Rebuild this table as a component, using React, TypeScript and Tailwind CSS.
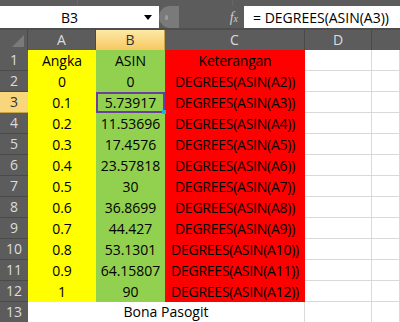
import React from "react";

const rows: { n: number; a: string; b: string }[] = [
  { n: 2, a: "0", b: "0" },
  { n: 3, a: "0.1", b: "5.73917" },
  { n: 4, a: "0.2", b: "11.53696" },
  { n: 5, a: "0.3", b: "17.4576" },
  { n: 6, a: "0.4", b: "23.57818" },
  { n: 7, a: "0.5", b: "30" },
  { n: 8, a: "0.6", b: "36.8699" },
  { n: 9, a: "0.7", b: "44.427" },
  { n: 10, a: "0.8", b: "53.1301" },
  { n: 11, a: "0.9", b: "64.15807" },
  { n: 12, a: "1", b: "90" },
];

const rowHead = "flex items-center justify-center border-b border-[#4a4a4a] bg-[#5c5c5c] text-[#dcdcdc]";
const colHead = "flex items-center justify-center border-r border-[#4a4a4a] bg-[#5c5c5c] text-[#dcdcdc]";
const blank = "border-r border-b border-[#d9d9d9] bg-white";
const redCell = "flex items-center justify-center whitespace-nowrap bg-[#ff0000] tracking-[-0.25px]";

export default function App() {
  return (
    <div
      className="flex h-[322px] w-[400px] flex-col overflow-hidden bg-[#5c5c5c] text-[14px] text-black"
      style={{ fontFamily: '"Open Sans", "Liberation Sans", sans-serif' }}
    >
      {/* top strip */}
      <div className="flex h-[6px] shrink-0">
        <div className="w-[78px] border-r border-[#666]" />
        <div className="w-[155px] border-r border-[#666]" />
      </div>

      {/* formula bar */}
      <div className="flex h-[22px] shrink-0 items-stretch">
        <div className="relative flex w-[159px] items-center bg-white">
          <span className="ml-[61px]">B3</span>
          <span className="absolute left-[144px] top-[9px] h-0 w-0 border-x-[4px] border-t-[5px] border-x-transparent border-t-black" />
        </div>
        <div className="flex w-[20px] items-center rounded-l-full bg-[#7a7a7a] pl-[6px]">
          <span className="h-[5px] w-[3px] rounded-sm bg-[#9a9a9a]" />
        </div>
        <div className="flex flex-1 items-center justify-end bg-[#5c5c5c] pr-[6px]">
          <span className="text-[14px] italic text-[#cfcfcf]" style={{ fontFamily: '"Liberation Serif", serif' }}>
            f<span className="text-[10px]">x</span>
          </span>
        </div>
        <div className="flex w-[156px] items-center bg-white pl-[9px] text-[14px]">= DEGREES(ASIN(A3))</div>
      </div>
      <div className="h-[2px] shrink-0 bg-[#4e4e4e]" />

      {/* sheet grid */}
      <div className="grid grid-cols-[28px_68px_69px_140px_67px_1fr] grid-rows-[20px_repeat(13,21px)] leading-none">
        {/* column headers */}
        <div className="relative border-r border-[#4a4a4a] bg-[#5c5c5c]">
          <span className="absolute bottom-[3px] right-[3px] h-0 w-0 border-b-[12px] border-l-[12px] border-b-[#7a7a7a] border-l-transparent" />
        </div>
        <div className={colHead}>A</div>
        <div className="flex items-center justify-center border-r border-[#c9a34a] bg-gradient-to-b from-[#fde9a6] to-[#f7c85e] text-[#333]">B</div>
        <div className={colHead}>C</div>
        <div className={colHead}>D</div>
        <div className="bg-[#5c5c5c]" />

        {/* row 1 */}
        <div className={rowHead}>1</div>
        <div className="flex items-center justify-center bg-[#ffff00]">Angka</div>
        <div className="flex items-center justify-center bg-[#92d050]">ASIN</div>
        <div className={redCell}>Keterangan</div>
        <div className={blank} />
        <div className={blank} />

        {rows.map((r) => (
          <React.Fragment key={r.n}>
            <div
              className={
                r.n === 3
                  ? "flex items-center justify-center border-b border-[#c9a34a] bg-[#f9d57c] text-[#333]"
                  : rowHead
              }
            >
              {r.n}
            </div>
            <div className="flex items-center justify-center bg-[#ffff00]">{r.a}</div>
            <div
              className={
                r.n === 3
                  ? "relative flex items-center justify-center border-2 border-[#6a3f9e] bg-[#92d050]"
                  : "flex items-center justify-center bg-[#92d050]"
              }
            >
              {r.b}
              {r.n === 3 && (
                <span className="absolute -bottom-[3px] -right-[3px] h-[4px] w-[4px] bg-[#1fb0e8]" />
              )}
            </div>
            <div className={redCell}>{`DEGREES(ASIN(A${r.n}))`}</div>
            <div className={blank} />
            <div className={blank} />
          </React.Fragment>
        ))}

        {/* row 13 */}
        <div className={rowHead}>13</div>
        <div className="col-span-3 flex items-center justify-center border-r border-b border-[#d9d9d9] bg-white">
          Bona Pasogit
        </div>
        <div className={blank} />
        <div className={blank} />
      </div>
    </div>
  );
}
